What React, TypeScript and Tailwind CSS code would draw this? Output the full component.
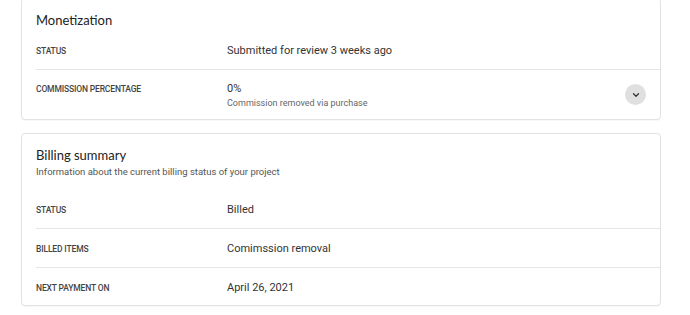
import { ChevronDown } from "lucide-react";

type Row = { label: string; value: string; sub?: string; expand?: boolean };

const monetization: Row[] = [
  { label: "Status", value: "Submitted for review 3 weeks ago" },
  { label: "Commission percentage", value: "0%", sub: "Commission removed via purchase", expand: true },
];

const billing: Row[] = [
  { label: "Status", value: "Billed" },
  { label: "Billed items", value: "Comimssion removal" },
  { label: "Next payment on", value: "April 26, 2021" },
];

function InfoRow({ row, last }: { row: Row; last: boolean }) {
  const height = row.sub ? "h-[49px]" : last ? "h-[37px]" : "h-[39px]";
  return (
    <div className={`ml-[14px] pr-[14px] flex items-center ${height} ${last ? "" : "border-b border-[#e6e6e6]"}`}>
      <div className="flex flex-1 items-start pt-[2px]">
        <div className="w-[191px] pt-[1px] text-[8.5px] font-medium uppercase tracking-[-0.15px] text-[#444]">
          {row.label}
        </div>
        <div>
          <div className="text-[11px] leading-[14px] text-[#333]">{row.value}</div>
          {row.sub && <div className="mt-[1px] text-[9px] leading-[12px] text-[#666]">{row.sub}</div>}
        </div>
      </div>
      {row.expand && (
        <button className="flex h-[21px] w-[21px] items-center justify-center rounded-full bg-[#e0e0e0]">
          <ChevronDown size={10} strokeWidth={3} className="text-[#333]" />
        </button>
      )}
    </div>
  );
}

function Card({ title, subtitle, rows, className }: { title: string; subtitle?: string; rows: Row[]; className?: string }) {
  return (
    <section className={`rounded-[4px] border border-[#e2e2e2] bg-white shadow-[0_1px_1px_rgba(0,0,0,0.03)] ${className ?? ""}`}>
      <div className={`px-[14px] pt-[13px] ${subtitle ? "pb-[12px]" : "pb-[2px]"}`}>
        <h2 className="text-[13px] leading-[17px] text-[#222] font-['Lato',sans-serif]">{title}</h2>
        {subtitle && <p className="mt-[1px] text-[9.5px] leading-[13px] text-[#555]">{subtitle}</p>}
      </div>
      {rows.map((r, i) => (
        <InfoRow key={i} row={r} last={i === rows.length - 1} />
      ))}
    </section>
  );
}

export default function App() {
  return (
    <div className="min-h-[315px] bg-white font-['Roboto',sans-serif] overflow-hidden">
      <div className="ml-[21px] w-[640px] -mt-[2px]">
        <Card title="Monetization" rows={monetization} />
        <Card className="mt-[13px]" title="Billing summary" subtitle="Information about the current billing status of your project" rows={billing} />
      </div>
    </div>
  );
}
